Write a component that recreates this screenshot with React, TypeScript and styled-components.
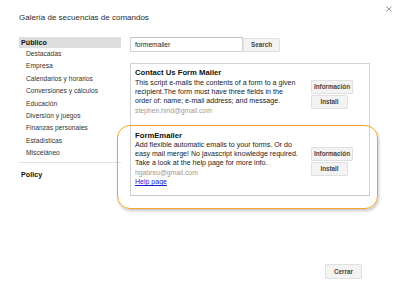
import styled, { createGlobalStyle } from "styled-components";

const GlobalStyle = createGlobalStyle`
  html, body {
    margin: 0;
    padding: 0;
    background: #ffffff;
  }
  body {
    font-family: "Liberation Sans", Arial, sans-serif;
    color: #222222;
  }
  * {
    box-sizing: border-box;
  }
`;

const Page = styled.div`
  position: relative;
  display: flex;
  flex-direction: column;
  width: 400px;
  height: 296px;
  padding: 13px 0 17px 19px;
  overflow: hidden;
`;

const Header = styled.div`
  display: flex;
  align-items: flex-start;
  justify-content: space-between;
  padding-right: 7px;
`;

const Title = styled.h1`
  margin: 0;
  font-size: 8px;
  line-height: 10px;
  font-weight: normal;
  color: #2a2a2a;
`;

const CloseButton = styled.button`
  display: flex;
  align-items: center;
  justify-content: center;
  width: 8px;
  height: 8px;
  margin-top: -8px;
  padding: 0;
  border: 0;
  background: transparent;
  cursor: pointer;
`;

const Body = styled.div`
  display: grid;
  grid-template-columns: 102px 1fr;
  column-gap: 9px;
  margin-top: 14px;
`;

const Sidebar = styled.nav`
  display: flex;
  flex-direction: column;
`;

const CategoryHeading = styled.div<{ $active?: boolean }>`
  height: 11px;
  padding-left: 2px;
  font-size: 7.2px;
  line-height: 11px;
  font-weight: bold;
  color: #111111;
  background: ${(p) => (p.$active ? "#dedede" : "transparent")};
`;

const Category = styled.div`
  height: 12.4px;
  padding-left: 7px;
  font-size: 6.7px;
  line-height: 12.4px;
  color: #333333;
`;

const SidebarDivider = styled.hr`
  margin: 2px 0 6px;
  border: 0;
  border-top: 1px solid #e2e2e2;
`;

const Content = styled.div`
  display: flex;
  flex-direction: column;
`;

const SearchRow = styled.div`
  display: flex;
  align-items: center;
`;

const SearchInput = styled.input`
  width: 113px;
  height: 15px;
  padding: 0 4px;
  border: 1px solid #d4d4d4;
  border-top-color: #c0c0c0;
  font-family: inherit;
  font-size: 6.7px;
  color: #222222;
  outline: none;
`;

const GrayButton = styled.button<{ $width: number; $height?: number }>`
  width: ${(p) => p.$width}px;
  height: ${(p) => p.$height ?? 14}px;
  padding: 0;
  border: 1px solid #e0e0e0;
  border-radius: 1px;
  background: #f3f3f3;
  font-family: inherit;
  font-size: 6.3px;
  font-weight: bold;
  color: #444444;
  cursor: pointer;
`;

const ResultList = styled.div`
  width: 240px;
  margin-top: 11px;
  border: 1px solid #d2d2d2;
  border-bottom-color: #c4c4c4;
`;

const Result = styled.div<{ $top: number; $bottom: number }>`
  position: relative;
  display: grid;
  grid-template-columns: 1fr auto;
  align-items: center;
  padding: ${(p) => p.$top}px 16px ${(p) => p.$bottom}px 4px;
`;

const ResultText = styled.div`
  display: flex;
  flex-direction: column;
`;

const ResultTitle = styled.div`
  font-size: 7.7px;
  line-height: 9px;
  font-weight: bold;
  color: #111111;
`;

const Description = styled.div`
  width: 166px;
  margin-top: 1.5px;
  font-size: 7.1px;
  line-height: 9px;
  color: #222222;
`;

const Author = styled.div`
  font-size: 6.8px;
  line-height: 9px;
  color: #9a9a9a;
`;

const HelpLink = styled.a`
  font-size: 7px;
  line-height: 9px;
  color: #1a1ad6;
  text-decoration: underline;
`;

const Actions = styled.div`
  display: flex;
  flex-direction: column;
  align-items: flex-start;
  gap: 1px;
  margin-top: 6px;
`;

const Highlight = styled.div`
  position: absolute;
  top: -1px;
  left: -14px;
  right: -9px;
  bottom: -14px;
  border: 1.5px solid #f6a52a;
  border-radius: 13px;
  box-shadow: 1px 2px 3px rgba(0, 0, 0, 0.22);
  pointer-events: none;
`;

const Footer = styled.div`
  display: flex;
  justify-content: flex-end;
  margin-top: auto;
  padding-right: 38px;
`;

const categories = [
  "Destacadas",
  "Empresa",
  "Calendarios y horarios",
  "Conversiones y cálculos",
  "Educación",
  "Diversión y juegos",
  "Finanzas personales",
  "Estadísticas",
  "Misceláneo",
];

interface ScriptResult {
  title: string;
  description: string;
  author: string;
  helpUrl?: string;
  highlighted?: boolean;
}

const results: ScriptResult[] = [
  {
    title: "Contact Us Form Mailer",
    description:
      "This script e-mails the contents of a form to a given recipient.The form must have three fields in the order of: name; e-mail address; and message.",
    author: "stephen.hind@gmail.com",
  },
  {
    title: "FormEmailer",
    description:
      "Add flexible automatic emails to your forms. Or do easy mail merge! No javascript knowledge required. Take a look at the help page for more info.",
    author: "hgabreu@gmail.com",
    helpUrl: "#",
    highlighted: true,
  },
];

function CloseIcon() {
  return (
    <svg width="6" height="6" viewBox="0 0 6 6" aria-hidden>
      <path d="M0.5 0.5 L5.5 5.5 M5.5 0.5 L0.5 5.5" stroke="#9a9a9a" strokeWidth="1" />
    </svg>
  );
}

function ResultRow({ result, index }: { result: ScriptResult; index: number }) {
  return (
    <Result $top={index === 0 ? 4 : 5} $bottom={index === 0 ? 11 : 9}>
      <ResultText>
        <ResultTitle>{result.title}</ResultTitle>
        <Description>{result.description}</Description>
        <Author>{result.author}</Author>
        {result.helpUrl && <HelpLink href={result.helpUrl}>Help page</HelpLink>}
      </ResultText>
      <Actions>
        <GrayButton $width={42}>Información</GrayButton>
        <GrayButton $width={37}>Install</GrayButton>
      </Actions>
      {result.highlighted && <Highlight />}
    </Result>
  );
}

export default function App() {
  return (
    <>
      <GlobalStyle />
      <Page>
        <Header>
          <Title>Galería de secuencias de comandos</Title>
          <CloseButton aria-label="Cerrar">
            <CloseIcon />
          </CloseButton>
        </Header>
        <Body>
          <Sidebar>
            <CategoryHeading $active>Público</CategoryHeading>
            {categories.map((c) => (
              <Category key={c}>{c}</Category>
            ))}
            <SidebarDivider />
            <CategoryHeading>Policy</CategoryHeading>
          </Sidebar>
          <Content>
            <SearchRow>
              <SearchInput defaultValue="formemailer" />
              <GrayButton $width={37}>Search</GrayButton>
            </SearchRow>
            <ResultList>
              {results.map((r, i) => (
                <ResultRow key={r.title} result={r} index={i} />
              ))}
            </ResultList>
          </Content>
        </Body>
        <Footer>
          <GrayButton $width={37} $height={15}>
            Cerrar
          </GrayButton>
        </Footer>
      </Page>
    </>
  );
}
